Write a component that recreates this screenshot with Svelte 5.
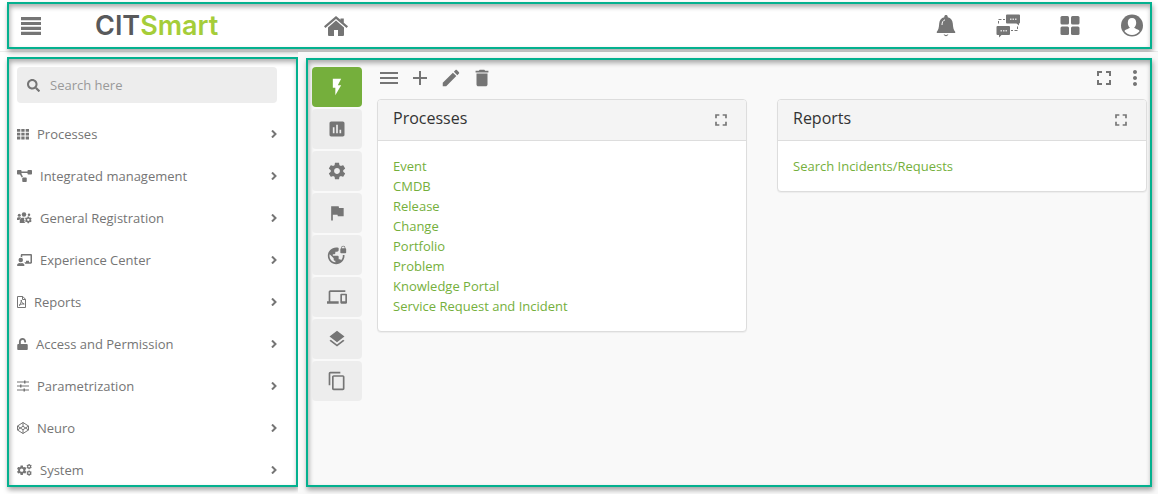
<script>
  const menu = [
    { label: 'Processes', icon: 'grid', w: 12 },
    { label: 'Integrated management', icon: 'diagram', w: 15 },
    { label: 'General Registration', icon: 'users', w: 15 },
    { label: 'Experience Center', icon: 'teacher', w: 15 },
    { label: 'Reports', icon: 'pdf', w: 9 },
    { label: 'Access and Permission', icon: 'unlock', w: 11 },
    { label: 'Parametrization', icon: 'sliders', w: 12 },
    { label: 'Neuro', icon: 'codepen', w: 12 },
    { label: 'System', icon: 'cogs', w: 15 }
  ];

  const gear =
    'M19.43 12.98c.04-.32.07-.64.07-.98s-.03-.66-.07-.98l2.11-1.65c.19-.15.24-.42.12-.64l-2-3.46c-.12-.22-.39-.3-.61-.22l-2.49 1c-.52-.4-1.08-.73-1.69-.98l-.38-2.65C14.46 2.18 14.25 2 14 2h-4c-.25 0-.46.18-.49.42l-.38 2.65c-.61.25-1.17.59-1.69.98l-2.49-1c-.23-.09-.49 0-.61.22l-2 3.46c-.13.22-.07.49.12.64l2.11 1.65c-.04.32-.07.65-.07.98s.03.66.07.98l-2.11 1.65c-.19.15-.24.42-.12.64l2 3.46c.12.22.39.3.61.22l2.49-1c.52.4 1.08.73 1.69.98l.38 2.65c.03.24.24.42.49.42h4c.25 0 .46-.18.49-.42l.38-2.65c.61-.25 1.17-.59 1.69-.98l2.49 1c.23.09.49 0 .61-.22l2-3.46c.12-.22.07-.49-.12-.64l-2.11-1.65zM12 15.5c-1.93 0-3.5-1.57-3.5-3.5s1.57-3.5 3.5-3.5 3.5 1.57 3.5 3.5-1.57 3.5-3.5 3.5z';

  const tabs = [
    { label: 'Quick access', d: 'M7 2v11h3v9l7-12h-4l4-8z', active: true },
    { label: 'Dashboards', d: 'M19 3H5c-1.1 0-2 .9-2 2v14c0 1.1.9 2 2 2h14c1.1 0 2-.9 2-2V5c0-1.1-.9-2-2-2zM9 17H7v-7h2v7zm4 0h-2V7h2v10zm4 0h-2v-4h2v4z' },
    { label: 'Settings', d: gear },
    { label: 'Flags', d: 'M14.4 6L14 4H5v17h2v-7h5.6l.4 2h7V6z' },
    { label: 'Network', d: 'M22 4v-.5C22 2.12 20.88 1 19.5 1S17 2.12 17 3.5V4c-.55 0-1 .45-1 1v4c0 .55.45 1 1 1h5c.55 0 1-.45 1-1V5c0-.55-.45-1-1-1zm-.8 0h-3.4v-.5c0-.94.76-1.7 1.7-1.7s1.7.76 1.7 1.7V4zm-2.28 8c.04.33.08.66.08 1 0 2.08-.8 3.97-2.1 5.39-.26-.81-1-1.39-1.9-1.39h-1v-3c0-.55-.45-1-1-1H7v-2h2c.55 0 1-.45 1-1V8h2c1.1 0 2-.9 2-2V3.46c-.95-.3-1.95-.46-3-.46C5.48 3 1 7.48 1 13s4.48 10 10 10 10-4.48 10-10c0-.34-.02-.67-.05-1h-2.03zM10 20.93c-3.95-.49-7-3.85-7-7.93 0-.62.08-1.21.21-1.79L8 16v1c0 1.1.9 2 2 2v1.93z' },
    { label: 'Devices', d: 'M4 6h18V4H4c-1.1 0-2 .9-2 2v11H0v3h14v-3H4V6zm19 2h-6c-.55 0-1 .45-1 1v10c0 .55.45 1 1 1h6c.55 0 1-.45 1-1V9c0-.55-.45-1-1-1zm-1 9h-4v-7h4v7z' },
    { label: 'Layers', d: 'M11.99 18.54l-7.37-5.73L3 14.07l9 7 9-7-1.63-1.27-7.38 5.74zM12 16l7.36-5.73L21 9l-9-7-9 7 1.63 1.27L12 16z' },
    { label: 'Copies', d: 'M16 1H4c-1.1 0-2 .9-2 2v14h2V3h12V1zm3 4H8c-1.1 0-2 .9-2 2v14c0 1.1.9 2 2 2h11c1.1 0 2-.9 2-2V7c0-1.1-.9-2-2-2zm0 16H8V7h11v14z' }
  ];

  const expand = 'M7 14H5v5h5v-2H7v-3zm-2-4h2V7h3V5H5v5zm12 7h-3v2h5v-5h-2v3zM14 5v2h3v3h2V5h-5z';

  const tools = [
    { label: 'List', size: 24, d: 'M3 18h18v-2H3v2zm0-5h18v-2H3v2zm0-7v2h18V6H3z' },
    { label: 'Add', size: 24, d: 'M19 13h-6v6h-2v-6H5v-2h6V5h2v6h6v2z' },
    { label: 'Edit', size: 22, d: 'M3 17.25V21h3.75L17.81 9.94l-3.75-3.75L3 17.25zM20.71 7.04c.39-.39.39-1.02 0-1.41l-2.34-2.34c-.39-.39-1.02-.39-1.41 0l-1.83 1.83 3.75 3.75 1.83-1.83z' },
    { label: 'Delete', size: 22, d: 'M6 19c0 1.1.9 2 2 2h8c1.1 0 2-.9 2-2V7H6v12zM19 4h-3.5l-1-1h-5l-1 1H5v2h14V4z' }
  ];

  const cards = [
    {
      title: 'Processes',
      links: ['Event', 'CMDB', 'Release', 'Change', 'Portfolio', 'Problem', 'Knowledge Portal', 'Service Request and Incident']
    },
    { title: 'Reports', links: ['Search Incidents/Requests'] }
  ];
</script>

{#snippet icon(d, size)}
  <svg width={size} height={size} viewBox="0 0 24 24" aria-hidden="true"><path {d} /></svg>
{/snippet}

{#snippet menuIcon(name, w)}
  {#if name === 'grid'}
    <svg width={w} height="12" viewBox="0 0 12 12"><path d="M0 1h3.3v2.8H0zM4.3 1h3.3v2.8H4.3zM8.700 1H12v2.800H8.700zM0 4.800h3.300v2.800H0zM4.300 4.800h3.300v2.800H4.300zM8.700 4.800H12v2.800H8.700zM0 8.600h3.300v2.800H0zM4.300 8.600h3.300v2.800H4.300zM8.700 8.600H12v2.800H8.700z" /></svg>
  {:else if name === 'diagram'}
    <svg width={w} height="12" viewBox="0 0 640 512"><path d="M384 320H256c-17.670 0-32 14.330-32 32v128c0 17.670 14.330 32 32 32h128c17.670 0 32-14.330 32-32V352c0-17.670-14.330-32-32-32zM192 32c0-17.670-14.330-32-32-32H32C14.330 0 0 14.330 0 32v128c0 17.670 14.330 32 32 32h95.720l73.160 128.040C211.980 300.980 232.400 288 256 288h.28L192 175.510V128h256V64H192V32zM608 0H480c-17.670 0-32 14.330-32 32v128c0 17.670 14.330 32 32 32h128c17.670 0 32-14.330 32-32V32c0-17.670-14.330-32-32-32z" /></svg>
  {:else if name === 'users'}
    <svg width={w} height="12" viewBox="0 0 30 24">
      <circle cx="4.500" cy="6.500" r="3" /><circle cx="14" cy="5" r="4.500" /><circle cx="24" cy="5.500" r="2.500" />
      <path d="M0 16v-2.500c0-2 1-3 3-3h3.500c1 0 2 .4 2 1-2 1-3 2-3.500 4.500zM5.500 22v-3.500c0-4 2-7 5-7h4.500l-1 3.500 1.500 2-1 2.500 2 2.500z" />
      <g transform="translate(14.500 7.500) scale(.68)"><path d={gear} /></g>
    </svg>
  {:else if name === 'teacher'}
    <svg width={w} height="12" viewBox="0 0 640 512"><path d="M160 352a96 96 0 1 0 0-192 96 96 0 0 0 0 192zm48 32c-30 14-66 14-96 0-62 0-112 46-112 100 0 16 14 28 32 28h256c18 0 32-12 32-28 0-54-50-100-112-100zM592 0H208c-26 0-48 22-48 50v78c24 0 45 7 64 18V64h352v288h-64v-64H384v64h-76c20 16 35 38 43 64h241c26 0 48-22 48-50V50c0-28-22-50-48-50z" /></svg>
  {:else if name === 'pdf'}
    <svg width={w} height="12" viewBox="0 0 18 24"><path class="line" d="M1 1h10.500L17 6.500V23H1zM11 1v6h6" /><path class="line" d="M4 19c3-2 5-7 4.500-11 0 4 2 7 6 8-4-.5-7 .5-10.500 3z" /></svg>
  {:else if name === 'unlock'}
    <svg width={w} height="12" viewBox="0 0 448 512"><path d="M400 256H152V152.900c0-39.600 31.700-72.500 71.300-72.900 40-.4 72.700 32.100 72.700 72v16c0 13.300 10.700 24 24 24h32c13.300 0 24-10.700 24-24v-16C376 68 307.500-.3 223.500 0 139.500.3 72 69.500 72 153.500V256H48c-26.500 0-48 21.500-48 48v160c0 26.500 21.500 48 48 48h352c26.500 0 48-21.500 48-48V304c0-26.500-21.500-48-48-48z" /></svg>
  {:else if name === 'sliders'}
    <svg width={w} height="12" viewBox="0 0 12 12"><path d="M0 1.500h7v-1h1.500v1H12v1H8.500v1H7v-1H0zM0 5.500h3v-1h1.500v1H12v1H4.500v1H3v-1H0zM0 9.500h6.500v-1H8v1h4v1H8v1H6.500v-1H0z" /></svg>
  {:else if name === 'codepen'}
    <svg width={w} height="12" viewBox="0 0 24 24"><path class="line" d="M12 1l11 7v8l-11 7L1 16V8zM12 1v7.500M12 15.500V23M1 8l11 7.500L23 8M1 16l11-7.500L23 16" /></svg>
  {:else}
    <svg width={w} height="12" viewBox="0 0 30 24">
      <g transform="translate(-2 1) scale(.95)"><path d={gear} /></g>
      <g transform="translate(18 -1) scale(.52)"><path d={gear} /></g>
      <g transform="translate(18 12) scale(.52)"><path d={gear} /></g>
    </svg>
  {/if}
{/snippet}

<div class="page">
  <header>
    <div class="frame topbar">
      <button class="burger" aria-label="Toggle menu">
        <svg width="20" height="18" viewBox="0 0 20 18"><path d="M0 0h20v3.200H0zM0 4.900h20v3.200H0zM0 9.800h20V13H0zM0 14.700h20v3.200H0z" /></svg>
      </button>
      <a class="logo" href="#home">CIT<span>Smart</span></a>
      <a class="home" href="#home" aria-label="Home">
        <svg width="24" height="20" viewBox="0 0 24 20"><path d="M12 0l4.500 3.800V2.500h3.300v4.200L24 10.300l-1.400 1.600L12 3 1.400 11.900 0 10.300zM12 4.600l8 6.800V19q0 1-1 1h-5v-6h-4v6H5q-1 0-1-1v-7.600z" /></svg>
      </a>
      <div class="actions">
        <button aria-label="Notifications">
          <svg width="24" height="24" viewBox="0 0 24 24"><path d="M12 1c1 0 1.700.7 1.700 1.600v.7C17 4 18.500 6.500 18.800 9.500c.3 4 .7 6.500 2.400 8.200V19H2.800v-1.300c1.700-1.700 2.100-4.200 2.400-8.200C5.500 6.500 7 4 10.300 3.300v-.7C10.300 1.700 11 1 12 1zM9.500 20.500h1.400q1.100 1 2.200 0h1.400q-2.500 3.600-5 0z" /><path d="M8 11c0-3 1-4.500 3-5.200" fill="none" stroke="#fff" stroke-width="1" /></svg>
        </button>
        <button aria-label="Chat">
          <svg width="24" height="24" viewBox="0 0 24 24"><path d="M11 .5h12q1 0 1 1v7q0 1-1 1v2l-2.500-2H11q-1 0-1-1v-7q0-1 1-1zM1.500 12h11.500q1 0 1 1v7q0 1-1 1H5.500L3 23.500V21H1.500q-1 0-1-1v-7q0-1 1-1z" /><path class="wire" d="M2.500 9.500V7M2.500 5.500h3M7 5.500h2M21.500 12.500V15M21.500 16.500h-3M17 16.500h-2" /><path d="M14 4.500h1.500V6H14zM16.500 4.500H18V6h-1.500zM19 4.500h1.500V6H19zM4.500 16H6v1.500H4.500zM7 16h1.500v1.500H7zM9.500 16H11v1.500H9.500z" fill="#ddd" /></svg>
        </button>
        <button aria-label="Applications">
          <svg width="24" height="24" viewBox="0 0 24 24"><rect x="2.500" y="2" width="8.500" height="8.500" rx="1.500" /><rect x="13" y="2" width="8.500" height="8.500" rx="1.500" /><rect x="2.500" y="12.500" width="8.500" height="8.500" rx="1.500" /><rect x="13" y="12.500" width="8.500" height="8.500" rx="1.500" /></svg>
        </button>
        <button aria-label="Profile">
          <svg width="24" height="24" viewBox="0 0 24 24"><circle cx="12" cy="11.500" r="11" /><path d="M12 4c2.700 0 4.200 2 4.200 4.700 0 2-.8 3.800-2 4.800.2 1.300 5 1.800 5.300 3.800a9.500 9.500 0 0 1-15 0c.3-2 5.100-2.500 5.300-3.800-1.200-1-2-2.800-2-4.800C7.800 6 9.300 4 12 4z" fill="#fff" /></svg>
        </button>
      </div>
    </div>
  </header>

  <div class="body">
    <aside>
      <div class="frame side">
        <label class="search">
          <svg width="13" height="13" viewBox="0 0 512 512" aria-hidden="true"><path d="M505 442.700L405.300 343c-4.500-4.500-10.600-7-17-7H372c27.600-35.300 44-79.700 44-128C416 93.100 322.900 0 208 0S0 93.100 0 208s93.100 208 208 208c48.300 0 92.700-16.400 128-44v16.300c0 6.400 2.500 12.500 7 17l99.700 99.700c9.400 9.400 24.600 9.400 33.900 0l28.300-28.300c9.400-9.400 9.400-24.600.1-34zM208 336c-70.700 0-128-57.200-128-128 0-70.700 57.200-128 128-128 70.700 0 128 57.200 128 128 0 70.700-57.200 128-128 128z" /></svg>
          <input type="text" placeholder="Search here" aria-label="Search here" />
        </label>
        <nav>
          {#each menu as m}
            <a href="#{m.icon}">
              {@render menuIcon(m.icon, m.w)}
              <span>{m.label}</span>
              <svg class="chev" width="6" height="8" viewBox="0 0 6 8"><path d="M1 .5L4.500 4 1 7.500" /></svg>
            </a>
          {/each}
        </nav>
      </div>
    </aside>

    <main>
      <div class="frame work">
        <div class="rail">
          {#each tabs as t}
            <button class:active={t.active} aria-label={t.label}>{@render icon(t.d, 20)}</button>
          {/each}
        </div>
        <div class="content">
          <div class="tools">
            {#each tools as t}
              <button aria-label={t.label}>{@render icon(t.d, t.size)}</button>
            {/each}
            <button class="push" aria-label="Full screen">{@render icon(expand, 24)}</button>
            <button aria-label="More options">{@render icon('M12 8c1.100 0 2-.9 2-2s-.9-2-2-2-2 .9-2 2 .9 2 2 2zm0 2c-1.100 0-2 .9-2 2s.9 2 2 2 2-.9 2-2-.9-2-2-2zm0 6c-1.100 0-2 .9-2 2s.9 2 2 2 2-.9 2-2-.9-2-2-2z', 24)}</button>
          </div>
          <div class="cards">
            {#each cards as c}
              <section>
                <div class="head">
                  <h2>{c.title}</h2>
                  <button aria-label="Expand {c.title}">{@render icon(expand, 20)}</button>
                </div>
                <ul>
                  {#each c.links as l}
                    <li><a href="#{l}">{l}</a></li>
                  {/each}
                </ul>
              </section>
            {/each}
          </div>
        </div>
      </div>
    </main>
  </div>
</div>

<style>
  :global(body) {
    margin: 0;
    font: 13px/20px 'Open Sans', sans-serif;
    color: #757575;
  }
  * {
    box-sizing: border-box;
  }
  .page {
    min-height: 100vh;
    display: flex;
    flex-direction: column;
    background: #fff;
  }
  button {
    display: flex;
    align-items: center;
    justify-content: center;
    padding: 0;
    border: 0;
    background: none;
    color: inherit;
    cursor: pointer;
  }
  a {
    color: inherit;
    text-decoration: none;
  }
  svg {
    display: block;
    flex: none;
    fill: currentColor;
  }
  .line,
  .wire {
    fill: none;
    stroke: currentColor;
    stroke-width: 2;
  }
  .wire {
    stroke-width: 1;
  }
  .frame {
    border: 2px solid #04b18f;
    box-shadow:
      1px 3px 5px rgba(0, 0, 0, 0.35),
      inset 1px 3px 5px rgba(0, 0, 0, 0.32);
  }
  header {
    padding: 2px 6px 2px 7px;
    border-bottom: 1px solid #eee;
  }
  .topbar {
    display: flex;
    align-items: center;
    min-height: 47px;
    padding: 0 6px 0 12px;
  }
  .logo {
    margin-left: 54px;
    font: 600 27px/32px Inter, sans-serif;
    color: #58595b;
  }
  .logo span {
    color: #a5cd39;
  }
  .home {
    margin-left: 106px;
  }
  .actions {
    display: flex;
    gap: 38px;
    margin-left: auto;
  }
  .body {
    flex: 1;
    display: flex;
  }
  aside {
    flex: none;
    display: flex;
    width: 298px;
    padding: 5px 0 7px 7px;
  }
  .side {
    flex: 1;
    padding: 8px 19px 5px 8px;
  }
  .search {
    display: flex;
    align-items: center;
    gap: 10px;
    height: 36px;
    padding: 0 10px;
    border-radius: 4px;
    background: #ededed;
  }
  .search input {
    flex: 1;
    min-width: 0;
    padding: 0;
    border: 0;
    outline: 0;
    background: none;
    font: inherit;
    color: #707070;
  }
  .search input::placeholder {
    color: #999;
  }
  nav {
    display: flex;
    flex-direction: column;
    gap: 22px;
    margin-top: 21px;
  }
  nav a {
    display: flex;
    align-items: center;
    gap: 8px;
  }
  .chev {
    margin-left: auto;
    fill: none;
    stroke: currentColor;
    stroke-width: 2;
  }
  main {
    flex: 1;
    min-width: 0;
    display: flex;
    padding: 6px 6px 7px 8px;
    background: #f9f9f9;
  }
  .work {
    flex: 1;
    min-width: 0;
    display: flex;
    gap: 15px;
    padding: 7px 3px 7px 4px;
  }
  .rail {
    display: flex;
    flex-direction: column;
    gap: 2px;
  }
  .rail button {
    width: 50px;
    height: 40px;
    border-radius: 4px;
    background: #ededed;
  }
  .rail .active {
    background: #75af3c;
    color: #fff;
  }
  .content {
    flex: 1;
    min-width: 0;
  }
  .tools {
    display: flex;
    gap: 7px;
  }
  .tools button {
    width: 24px;
    height: 22px;
  }
  .tools .push {
    margin-left: auto;
  }
  .cards {
    display: grid;
    grid-template-columns: 1fr 1fr;
    align-items: start;
    gap: 30px;
    margin-top: 10px;
  }
  section {
    border: 1px solid #ddd;
    border-radius: 4px;
    background: #fff;
    box-shadow: 0 1px 1px rgba(0, 0, 0, 0.05);
    overflow: hidden;
  }
  .head {
    display: flex;
    align-items: center;
    justify-content: space-between;
    height: 41px;
    padding: 0 15px;
    border-bottom: 1px solid #ddd;
    background: #f4f4f4;
  }
  h2 {
    margin: 0 0 4px;
    font: 400 16px/20px 'Open Sans', sans-serif;
    color: #333;
  }
  ul {
    margin: 0;
    padding: 15px;
    list-style: none;
    color: #75af3c;
  }
</style>
